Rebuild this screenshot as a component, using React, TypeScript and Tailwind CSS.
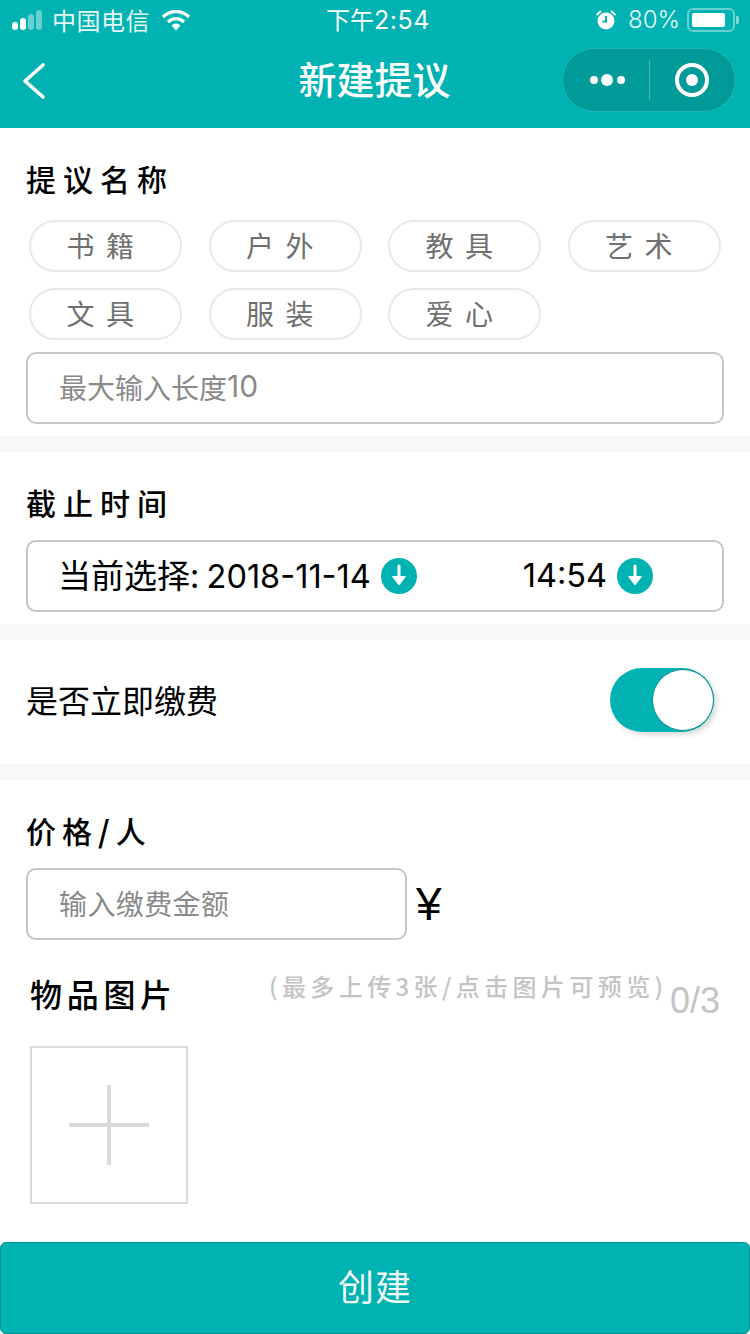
const cjk = { fontFamily: '"Noto Sans CJK SC", "Liberation Sans", sans-serif' };
const latin = { fontFamily: 'Inter, "Noto Sans CJK SC", sans-serif' };

function Chip({ text }: { text: string }) {
  return (
    <div className="w-[153px] h-[52px] rounded-[26px] border-2 border-[#e9e9e9] flex items-center justify-center text-[28px] text-[#6f6f6f] tracking-[2.500px] pb-[2px] pr-[8px]">
      {text}
    </div>
  );
}

function Band() {
  return <div className="h-4 bg-[#f8f8f8]" />;
}

function DownIcon() {
  return (
    <svg width="36" height="36" viewBox="0 0 36 36" className="shrink-0">
      <circle cx="18" cy="18" r="18" fill="#00b2b1" />
      <path d="M18 8v12" fill="none" stroke="#fff" strokeWidth="3" strokeLinecap="round" />
      <path d="M11.500 18.500h13L18 27z" fill="#fff" stroke="#fff" strokeWidth="1" strokeLinejoin="round" />
    </svg>
  );
}

function StatusBar() {
  return (
    <div className="h-10 flex items-center relative text-white">
      <div className="flex items-center pl-3 w-[300px]">
        <div className="flex items-end gap-[2px] h-[20px]">
          <div className="w-[6px] h-[8px] rounded-[3px] bg-white" />
          <div className="w-[6px] h-[12px] rounded-[3px] bg-white" />
          <div className="w-[6px] h-[16px] rounded-[3px] bg-white/40" />
          <div className="w-[6px] h-[20px] rounded-[3px] bg-white/40" />
        </div>
        <span className="ml-[10px] text-[24px] leading-none text-white/90 tracking-[0.500px]">中国电信</span>
        <svg width="30" height="22" viewBox="0 0 30 22" className="ml-[11px]">
          <path d="M2 8a18.500 18.500 0 0 1 26 0" fill="none" stroke="#fff" strokeWidth="3.200" />
          <path d="M7 13a11.300 11.300 0 0 1 16 0" fill="none" stroke="#fff" strokeWidth="3.200" />
          <path d="M10.500 16.500a6.200 6.200 0 0 1 9 0L15 21.500z" fill="#fff" />
        </svg>
      </div>
      <div className="w-[150px] pl-[6px] text-center text-[24px] leading-none whitespace-nowrap">
        下午<span style={latin} className="text-[25px] tracking-[0.500px]">2:54</span>
      </div>
      <div className="flex-1 flex items-center justify-end pr-[11px]">
        <svg width="22" height="22" viewBox="0 0 22 22">
          <circle cx="11" cy="12" r="8.500" fill="#fff" />
          <path d="M11 7v5.500H7.500" fill="none" stroke="#00b2b1" strokeWidth="2" />
          <path d="M1.500 6 6 2M20.500 6 16 2" stroke="#fff" strokeWidth="2" />
        </svg>
        <span className="ml-[11px] text-[24px] leading-none text-white/90 font-light" style={latin}>80%</span>
        <div className="ml-[7px] w-[48px] h-[24px] rounded-[6px] border-2 border-white/40 p-[3px]">
          <div className="w-[33px] h-full rounded-[2px] bg-white" />
        </div>
        <div className="ml-[1px] w-[3px] h-[8px] rounded-r-[2px] bg-white/50" />
      </div>
    </div>
  );
}

function NavBar() {
  return (
    <div className="h-[88px] flex items-center relative text-white">
      <div className="w-[187px] pl-[20px] shrink-0 pb-[6px]">
        <svg width="28" height="40" viewBox="0 0 28 40">
          <path d="M23 4 5 20l18 16" fill="none" stroke="#fff" strokeWidth="3.600" strokeLinecap="round" strokeLinejoin="round" />
        </svg>
      </div>
      <div className="w-[375px] text-center text-[38px] leading-none font-medium pb-[12px]">新建提议</div>
      <div className="w-[174px] h-[64px] -mt-[9px] rounded-[32px] bg-[#009a99] border border-[#1eb9b8] flex items-center shrink-0">
        <svg width="86" height="30" viewBox="0 0 86 30" className="shrink-0">
          <circle cx="31" cy="15" r="4" fill="#fff" />
          <circle cx="44" cy="15" r="6" fill="#fff" />
          <circle cx="58" cy="15" r="4" fill="#fff" />
        </svg>
        <div className="w-px h-[40px] shrink-0 bg-white/30" />
        <svg width="86" height="40" viewBox="0 0 86 40" className="shrink-0">
          <circle cx="42" cy="20" r="15" fill="none" stroke="#fff" strokeWidth="4" />
          <circle cx="42" cy="20" r="6" fill="#fff" />
        </svg>
      </div>
    </div>
  );
}

export default function App() {
  return (
    <div className="w-[750px] h-[1334px] bg-white flex flex-col overflow-hidden" style={cjk}>
      <div className="bg-[#00b2b1]">
        <StatusBar />
        <NavBar />
      </div>

      <div className="h-[308px] px-[26px] pt-[31px]">
        <div className="text-[30px] leading-[38px] font-medium text-black tracking-[7px]">提议名称</div>
        <div className="mt-[23px] ml-[3px] grid grid-cols-[153px_153px_153px_153px] gap-x-[26.500px] gap-y-[16px]">
          <Chip text="书 籍" />
          <Chip text="户 外" />
          <Chip text="教 具" />
          <Chip text="艺 术" />
          <Chip text="文 具" />
          <Chip text="服 装" />
          <Chip text="爱 心" />
        </div>
        <div className="mt-[12px] w-[698px] h-[72px] rounded-[10px] border-2 border-[#c6c6c6] flex items-center pl-[31px] pb-[3px] text-[28px] text-[#8a8a8a]">
          最大输入长度<span style={latin} className="text-[30px]">10</span>
        </div>
      </div>
      <Band />

      <div className="h-[172px] px-[26px] pt-[31px]">
        <div className="text-[30px] leading-[38px] font-medium text-black tracking-[7px]">截止时间</div>
        <div className="mt-[19px] w-[698px] h-[72px] rounded-[10px] border-2 border-[#c6c6c6] flex items-center pl-[30px] text-[33px] text-black whitespace-nowrap">
          <span>当前选择: <span style={latin} className="text-[32.500px]">2018-11-14</span></span>
          <span className="ml-[10px]"><DownIcon /></span>
          <span className="ml-[106px] text-[32.500px]" style={latin}>14:54</span>
          <span className="ml-[10px]"><DownIcon /></span>
        </div>
      </div>
      <Band />

      <div className="h-[124px] px-[26px] flex items-center justify-between">
        <div className="text-[32px] text-black pb-[6px]">是否立即缴费</div>
        <div className="mr-[10px] -mt-[4px] w-[104px] h-[64px] rounded-[32px] bg-[#00b2b1] flex justify-end items-center shadow-[3px_3px_5px_rgba(0,0,0,0.15)]">
          <div className="w-[62px] h-[62px] rounded-full bg-white border border-[#00908f]" />
        </div>
      </div>
      <Band />

      <div className="px-[26px] pt-[31px]">
        <div className="text-[30px] leading-[38px] font-medium text-black tracking-[6px]">价格<span className="font-bold">/</span>人</div>
        <div className="mt-[19px] flex items-center">
          <div className="w-[381px] h-[72px] rounded-[10px] border-2 border-[#c6c6c6] flex items-center pl-[31px] pb-[2px] text-[28px] tracking-[0.400px] text-[#8a8a8a]">
            输入缴费金额
          </div>
          <div className="ml-[9px] w-[30px] text-[46px] leading-none text-black" style={{ fontFamily: '"Liberation Sans", sans-serif' }}>¥</div>
        </div>
      </div>

      <div className="mt-[30px] pl-[30px] h-[50px] flex items-center relative whitespace-nowrap">
        <div className="text-[32px] leading-[50px] font-medium text-black tracking-[4.700px] w-[239px] shrink-0 pb-[4px]">物品图片</div>
        <div className="-mt-[18px] text-[24px] text-[#c4c4c4] font-medium tracking-[4.400px] w-[401px] shrink-0">(最多上传3张/点击图片可预览)</div>
        <div className="mt-[12px] text-[36px] text-[#c4c4c4]" style={{ fontFamily: '"Liberation Sans", sans-serif' }}>0/3</div>
      </div>

      <div className="mt-[26px] ml-[30px] w-[158px] h-[158px] border-2 border-[#d9d9d9] flex items-center justify-center">
        <svg width="80" height="80" viewBox="0 0 80 80">
          <path d="M0 40h80M40 0v80" stroke="#d9d9d9" strokeWidth="4" />
        </svg>
      </div>

      <div className="mt-[38px] h-[92px] bg-[#00b2b1] border border-[#009290] rounded-[6px] flex items-center justify-center pb-[6px] text-[36px] text-white/95 tracking-[1px]">
        创建
      </div>
    </div>
  );
}
